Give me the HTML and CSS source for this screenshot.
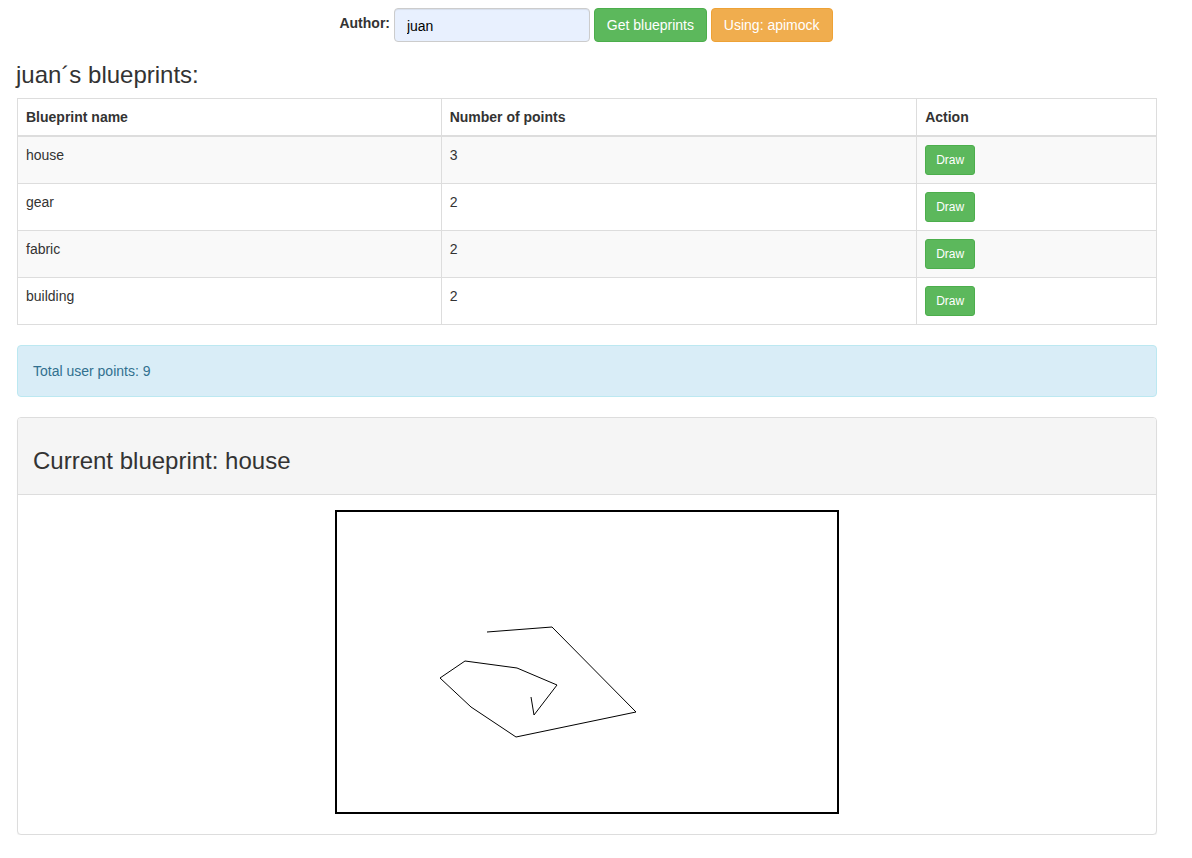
FILE: index.html
```html
<!DOCTYPE html>
<html>
<head>
<meta charset="utf-8">
<title>Blueprints</title>
<link rel="stylesheet" href="styles.css">
</head>
<body>
<div class="page">
  <div class="author-form">
    <label class="author-label" for="author">Author:</label>
    <input class="author-input" id="author" type="text" value="juan">
    <button class="btn btn-success">Get blueprints</button>
    <button class="btn btn-warning">Using: apimock</button>
  </div>

  <h3 class="title">juan´s blueprints:</h3>

  <table class="bp-table">
    <thead>
      <tr>
        <th class="col-name">Blueprint name</th>
        <th class="col-points">Number of points</th>
        <th class="col-action">Action</th>
      </tr>
    </thead>
    <tbody>
      <tr><td>house</td><td>3</td><td><button class="btn-sm">Draw</button></td></tr>
      <tr><td>gear</td><td>2</td><td><button class="btn-sm">Draw</button></td></tr>
      <tr><td>fabric</td><td>2</td><td><button class="btn-sm">Draw</button></td></tr>
      <tr><td>building</td><td>2</td><td><button class="btn-sm">Draw</button></td></tr>
    </tbody>
  </table>

  <div class="alert-info">Total user points: 9</div>

  <div class="panel">
    <div class="panel-heading">
      <h3 class="panel-h">Current blueprint: house</h3>
    </div>
    <div class="panel-body">
      <svg class="canvas" width="500" height="300" viewBox="0 0 500 300">
        <polyline fill="none" stroke="#000" stroke-width="1" points="150,120 215,115 299,200 179,225 134,195 103,166 128,149 180,156 220,173 197,203 194,185"/>
      </svg>
    </div>
  </div>
</div>
</body>
</html>
```

FILE: styles.css
```css
* { box-sizing: border-box; }
html, body { margin: 0; padding: 0; background: #fff; }
body {
  font-family: "Liberation Sans", Arial, Helvetica, sans-serif;
  font-size: 14px;
  line-height: 1.42857;
  color: #333;
}
.page {
  width: 1140px;
  margin-left: 17px;
  padding-top: 8px;
}
.author-form {
  text-align: center;
  height: 34px;
  white-space: nowrap;
  padding-right: 2px;
}
.author-label {
  display: inline-block;
  font-weight: bold;
  vertical-align: middle;
  margin-bottom: 3px;
}
.author-input {
  display: inline-block;
  vertical-align: middle;
  width: 196px;
  height: 34px;
  padding: 7px 12px 5px;
  font-family: inherit;
  font-size: 14px;
  color: #000;
  background: #e8f0fe;
  border: 1px solid #ccc;
  border-radius: 4px;
  box-shadow: inset 0 1px 1px rgba(0,0,0,.075);
  outline: none;
}
.btn {
  display: inline-block;
  vertical-align: middle;
  height: 34px;
  padding: 7px 12px 5px;
  font-family: inherit;
  font-size: 14px;
  line-height: 1.42857;
  color: #fff;
  border: 1px solid transparent;
  border-radius: 4px;
  cursor: pointer;
}
.btn-success { background: #5cb85c; border-color: #4cae4c; }
.btn-warning { background: #f0ad4e; border-color: #eea236; }
.title {
  font-size: 24px;
  font-weight: 500;
  line-height: 1.1;
  margin: 20px 0 10px -1px;
}
.bp-table {
  width: 1140px;
  border-collapse: collapse;
  border: 1px solid #ddd;
  margin-bottom: 20px;
}
.bp-table th, .bp-table td {
  padding: 9px 8px 7px;
  border: 1px solid #ddd;
  text-align: left;
  vertical-align: top;
  line-height: 1.42857;
}
.bp-table th {
  font-weight: bold;
  vertical-align: bottom;
  border-bottom: 2px solid #ddd;
}
.bp-table td:last-child { padding-top: 8px; padding-bottom: 8px; }
.col-name { width: 424px; }
.col-points { width: 476px; }
.col-action { width: 240px; }
.bp-table tbody tr:nth-child(odd) { background: #f9f9f9; }
.btn-sm {
  display: inline-block;
  height: 30px;
  padding: 5px 10px;
  font-family: inherit;
  font-size: 12px;
  line-height: 1.5;
  color: #fff;
  background: #5cb85c;
  border: 1px solid #4cae4c;
  border-radius: 3px;
  cursor: pointer;
}
.alert-info {
  padding: 16px 15px 14px;
  margin-bottom: 20px;
  border: 1px solid #bce8f1;
  border-radius: 4px;
  background: #d9edf7;
  color: #31708f;
}
.panel {
  border: 1px solid #ddd;
  border-radius: 4px;
  background: #fff;
  box-shadow: 0 1px 1px rgba(0,0,0,.05);
}
.panel-heading {
  background: #f5f5f5;
  padding: 10px 15px;
  border-bottom: 1px solid #ddd;
  border-radius: 3px 3px 0 0;
}
.panel-h {
  font-size: 24px;
  font-weight: 500;
  line-height: 26px;
  margin: 20px 0 10px;
}
.panel-body {
  padding: 15px 15px 20px;
}
.canvas {
  display: block;
  margin: 0 auto;
  border: 2px solid #000;
  box-sizing: content-box;
  background: #fff;
}
```
